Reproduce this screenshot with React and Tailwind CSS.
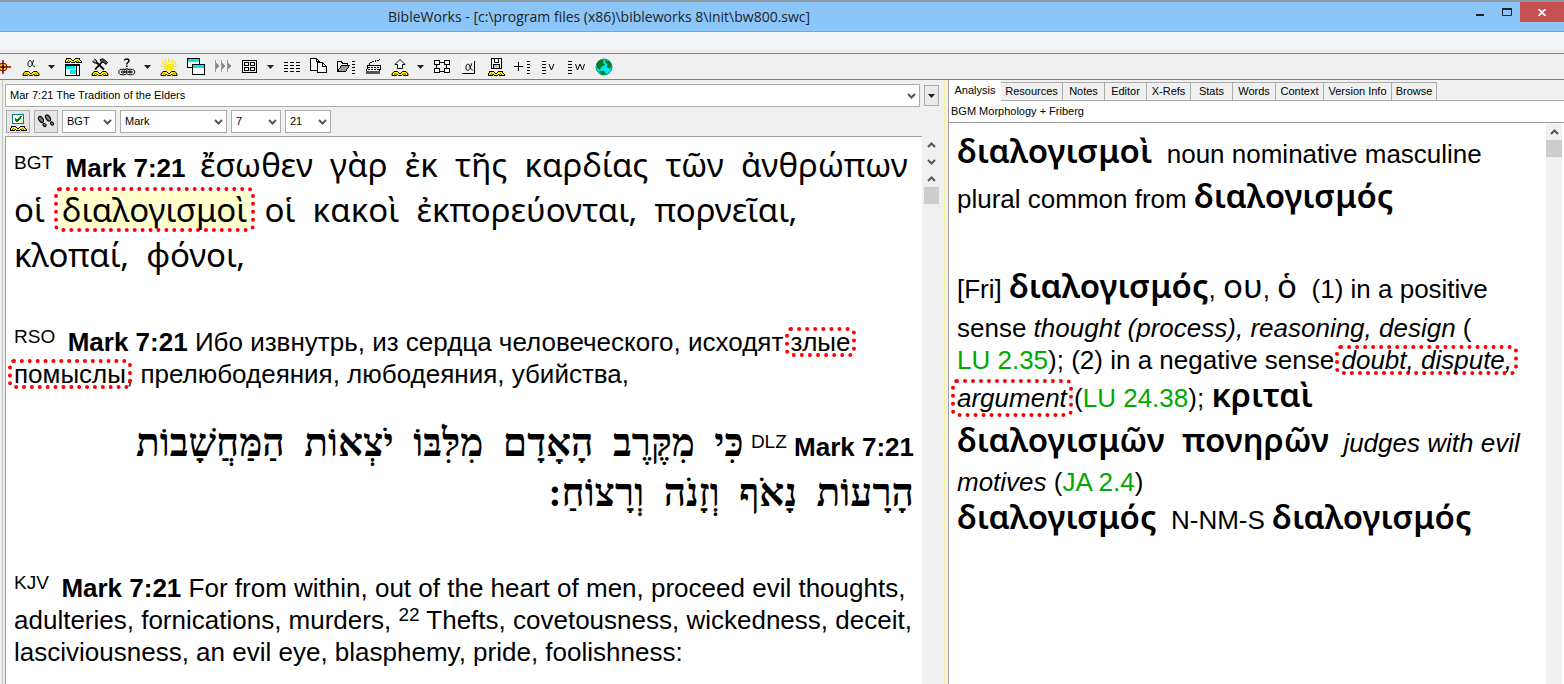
const Hills = ({ y = 12 }) => (
  <g transform={`translate(0 ${y})`}>
    <path d="M1 5.5V4L3 1.5H6.5L9 4L11.5 1.5H15L17 4V5.5H12.5L11.5 4.5L10.5 5.5H7.5L6.5 4.5L5.5 5.5Z" fill="#ffee00" stroke="#000" strokeWidth="1" />
    <path d="M3 4.5L4.5 3.5L6 4.5M12 4.5L13.5 3.5L15 4.5" fill="none" stroke="#7a7000" strokeWidth="1" />
  </g>
);

const Svg = ({ children, crisp = true }) => (
  <svg width="18" height="18" viewBox="0 0 18 18" fill="none" stroke="#000" strokeWidth="1" shapeRendering={crisp ? "crispEdges" : "auto"} aria-hidden="true" className="shrink-0">
    {children}
  </svg>
);

const ListLines = ({ x, w = 4 }) => (
  <path d={`M${x} 3.5h${w}M${x} 6.5h${w}M${x} 9.5h${w}M${x} 12.5h${w}M${x} 15.5h${w}`} />
);

const icons = {
  alpha: (
    <Svg crisp={false}>
      <path d="M11.5 2C10.5 6.800 9 9 7.4 8.7C5.200 8.300 5.600 2.700 8 2.5C10.2 2.400 10 8.7 12.8 8.7" />
      <Hills />
    </Svg>
  ),
  window: (
    <Svg>
      <Hills y={-1} />
      <rect x="1.5" y="6.5" width="14" height="11" fill="#fff" />
      <path d="M2 9h9" stroke="#00e8f0" strokeWidth="3" />
      <path d="M6 14h6" stroke="#00e8f0" strokeWidth="4" />
      <path d="M12.5 7v10M2 7.500h13" />
    </Svg>
  ),
  tools: (
    <Svg crisp={false}>
      <path d="M3 2L13 11.500" strokeWidth="1.800" />
      <path d="M4 11.500L11.500 3.500" strokeWidth="1.800" />
      <path d="M9 1.5L12 0.8L16.5 4.5L15 6.5L12 4L10.5 4.5Z" fill="#555" />
      <path d="M1.500 3L3 5L5.500 5L5.500 2.500L3.500 1" fill="#999" />
      <Hills />
    </Svg>
  ),
  help: (
    <Svg crisp={false}>
      <path d="M6.5 2.5C6.5 .6 11 .4 11 2.8C11 4.4 8.8 4.2 8.8 6.4M8.8 7.6v1.4" strokeWidth="1.5" />
      <ellipse cx="5" cy="14" rx="4.3" ry="2.8" fill="#fff" />
      <ellipse cx="12.5" cy="14" rx="4.3" ry="2.8" fill="#fff" />
      <ellipse cx="5" cy="14" rx="2" ry="1" />
      <ellipse cx="12.5" cy="14" rx="2" ry="1" />
      <path d="M6.5 12.5C7 10 10.5 10 11 12.5M5 14h8" />
    </Svg>
  ),
  sun: (
    <Svg crisp={false}>
      <path d="M9 0v5M5 1.5l2 4M13 1.5l-2 4M2 3.5l3.5 3.5M16 3.5l-3.5 3.5M1 8h4M17 8h-4" stroke="#f4e400" strokeWidth="1.2" />
      <path d="M5 12V9L7 6.5H11L13 9V12Z" fill="#ffee00" stroke="#ffee00" />
      <Hills />
    </Svg>
  ),
  windows: (
    <Svg>
      <rect x=".5" y=".5" width="12" height="9" fill="#fff" />
      <path d="M1 2.500h11" stroke="#00e8f0" strokeWidth="3" />
      <rect x="5.5" y="6.5" width="12" height="10" fill="#fff" />
      <path d="M6 8.5h11" stroke="#00e8f0" strokeWidth="3" />
    </Svg>
  ),
  arrows: (
    <Svg>
      <path d="M1.5 2v12M7.5 2v12M13.5 2v12" stroke="#999" />
      <path d="M2 5l3 3l-3 3zM8 5l3 3l-3 3zM14 5l3 3l-3 3z" fill="#888" stroke="none" />
    </Svg>
  ),
  grid: (
    <Svg>
      <rect x="1.500" y="2.500" width="14" height="12" />
      <rect x="3.500" y="4.500" width="4" height="3" />
      <rect x="9.500" y="4.500" width="4" height="3" />
      <rect x="3.500" y="9.500" width="4" height="3" />
      <rect x="9.500" y="9.500" width="4" height="3" />
    </Svg>
  ),
  lines: (
    <Svg>
      <path d="M1 4.5h16M1 7.5h16M1 10.5h16M1 13.5h16" strokeDasharray="4 2" />
    </Svg>
  ),
  copy: (
    <Svg>
      <path d="M.5 .5h6l3 3v9h-9zM6.5 .5v3h3" fill="#f8f8f8" />
      <path d="M7.500 4.5h5l4 4v6h-9zM12.5 4.5v4h4" fill="#f8f8f8" />
    </Svg>
  ),
  folder: (
    <Svg>
      <path d="M.5 12.5v-9h4l1 2h5v3" fill="#eee" />
      <path d="M.5 13.5l4-6h8l-4 6z" fill="#999" />
      <ListLines x={15} w={3} />
    </Svg>
  ),
  keyboard: (
    <Svg>
      <path d="M5 6.5v-2h3v-1h3v-1h3v-1h2" strokeDasharray="2 1" />
      <path d="M3.5 7.5h13l-1 8h-13z" fill="#fff" />
      <path d="M4 9.5h12M4 11.5h12" strokeWidth="1" strokeDasharray="2 1" />
      <path d="M2 14h14" strokeWidth="3" stroke="#555" />
    </Svg>
  ),
  upload: (
    <Svg crisp={false}>
      <path d="M9 1.5L14 6.5H11.5V10.5H6.5V6.5H4Z" fill="#fff" />
      <Hills />
    </Svg>
  ),
  nodes: (
    <Svg>
      <path d="M5 4.500h8M5 13.500h8M3.500 5v9M13.500 5v9" />
      <rect x="1.5" y="2.5" width="5" height="4" fill="#fff" />
      <rect x="11.5" y="2.5" width="5" height="4" fill="#fff" />
      <rect x="1.5" y="10.5" width="5" height="4" fill="#fff" />
      <rect x="11.5" y="10.5" width="5" height="4" fill="#fff" />
    </Svg>
  ),
  alphaKey: (
    <Svg crisp={false}>
      <path d="M2.5 15V3.5h12" stroke="#fff" />
      <path d="M14.5 3v12.5H2" />
      <path d="M11.5 5.500C10.5 10.5 9 12.6 7.4 12.3C5.200 12 5.600 6.300 8 6.1C10.2 6 10 12.2 12.8 12.2" />
    </Svg>
  ),
  disk: (
    <Svg>
      <path d="M4.5 .5h10v10h-10z" fill="#fff" />
      <path d="M7.5 1v3h4v-3" />
      <rect x="6.5" y="6.5" width="6" height="4" fill="#ccc" />
      <Hills />
    </Svg>
  ),
  plus: (
    <Svg>
      <path d="M0 8.5h9M4.5 4v9" />
      <ListLines x={13} w={3} />
    </Svg>
  ),
  listV: (
    <Svg crisp={false}>
      <ListLines x={1} w={4} />
      <path d="M8 6l2.500 6l2.500-6" />
    </Svg>
  ),
  listW: (
    <Svg crisp={false}>
      <ListLines x={0} w={4} />
      <path d="M7.500 6l2 6l2.500-6l2.500 6l2-6" />
    </Svg>
  ),
  globe: (
    <Svg crisp={false}>
      <circle cx="9" cy="9" r="8" fill="#00e5ee" stroke="#0b8f86" />
      <path d="M2 5L5 2L9 2L8 5L10 7L6 9L5 12L2 10ZM11 2L15 4L16.5 8L15 11L12 9L12 6L10 4ZM4 13L9 13L11 16L7 17Z" fill="#0b7a1c" stroke="none" />
    </Svg>
  ),
};

const toolbar = [
  ["Morphology", "alpha"], ["Morphology options"],
  ["Browse window", "window"], ["Tools", "tools"],
  ["Help", "help"], ["Help options"],
  ["Highlight", "sun"], ["Cascade", "windows"], ["Parallel", "arrows"],
  ["Layout", "grid"], ["Layout options"],
  ["List", "lines"], ["Copy", "copy"], ["Open list", "folder"], ["Keyboard", "keyboard"],
  ["Export", "upload"], ["Export options"],
  ["Diagram", "nodes"], ["Greek keys", "alphaKey"], ["Save", "disk"], ["Add to list", "plus"],
  ["Verse list", "listV"], ["Word list", "listW"], ["Internet", "globe"],
];

const Chevron = ({ up = false }) => (
  <svg width="9" height="6" viewBox="0 0 9 6" fill="none" stroke="#555" strokeWidth="2" aria-hidden="true">
    <path d={up ? "M1 5L4.5 1.5L8 5" : "M1 1L4.5 4.5L8 1"} />
  </svg>
);

const Caret = () => (
  <svg width="7" height="4" viewBox="0 0 7 4" aria-hidden="true"><path d="M0 0h7L3.5 4z" fill="#222" /></svg>
);

const Select = ({ label, value, className }) => (
  <div className={"relative h-[23px] border border-[#ababab] bg-white " + className}>
    <select aria-label={label} className="block h-full w-full appearance-none bg-transparent pl-1 text-[11px] outline-none">
      <option>{value}</option>
    </select>
    <span className="pointer-events-none absolute inset-y-0 right-[3px] flex items-center"><Chevron /></span>
  </div>
);

const Line = ({ tall, children }) => (
  <span className={"block " + (tall ? "leading-[45px]" : "leading-[32px]")}>{children}</span>
);
const Gk = ({ bold, children }) => (
  <span lang="el" className={"font-['Noto_Sans',sans-serif] text-[33px] leading-none " + (bold ? "font-semibold" : "")}>{children}</span>
);
const Tag = ({ children }) => <span className="align-[8px] text-[19px] leading-none">{children}</span>;
const Version = ({ children }) => <Tag>{children}{"\u00a0"}</Tag>;
const Ref = ({ children }) => <a href="#verse" className="text-[#00a800]">{children}</a>;

const Mark = ({ fill, roomy, children }) => (
  <span className="relative isolate">
    <span className={
      "absolute -z-10 rounded-md border-4 border-dotted border-[#f00] bg-clip-content p-px " +
      (fill ? "-inset-x-2 inset-y-0 bg-[#ffffcc]" : roomy ? "-inset-x-1.5 -inset-y-1" : "-inset-x-1.5 inset-y-0")
    } />
    {children}
  </span>
);

const tabs = [
  ["Resources", "w-[62px]"], ["Notes", "w-[42px]"], ["Editor", "w-[42px]"], ["X-Refs", "w-[44px]"],
  ["Stats", "w-[42px]"], ["Words", "w-[43px]"], ["Context", "w-[48px]"], ["Version Info", "w-[68px]"], ["Browse", "w-[45px]"],
];

const SP = "\u00a0 ";
const join = (...words) => words.join(SP);

export default function App() {
  return (
    <div className="flex min-h-screen flex-col bg-[#f0f0f0] font-['Liberation_Sans',Arial,sans-serif] text-black">
      <header className="flex h-8 items-start border-b border-t-2 border-b-[#7aa7cf] border-t-[#8f9aa3] bg-[#8cc6f9]">
        <h1 className="ml-[388px] flex-1 pt-[5px] font-['Open_Sans',sans-serif] text-[14px] leading-[20px] text-[#222]">
          BibleWorks - [c:\program files (x86)\bibleworks 8\init\bw800.swc]
        </h1>
        <button aria-label="Minimize" className="flex h-5 w-7 items-center justify-center">
          <svg width="8" height="12" aria-hidden="true"><path d="M0 9h8" stroke="#222" strokeWidth="2" /></svg>
        </button>
        <button aria-label="Maximize" className="flex h-5 w-[26px] items-center justify-center">
          <svg width="10" height="8" aria-hidden="true"><path d="M.5 1v6.500h9V1" fill="none" stroke="#222" /><path d="M0 1h10" stroke="#222" strokeWidth="2" /></svg>
        </button>
        <button aria-label="Close" className="flex h-5 w-[44px] items-center justify-center bg-[#c75050]">
          <svg width="8" height="7" aria-hidden="true"><path d="M.5 0l7 7M7.500 0l-7 7" stroke="#fff" strokeWidth="1.800" /></svg>
        </button>
      </header>
      <div className="h-[19px] border-b border-[#e2e3e5] bg-[#f4f5f7]" />
      <nav aria-label="Tools" className="mt-0.5 flex h-[27px] items-center overflow-hidden border-y border-[#808080]">
        <button aria-label="Search" className="flex h-6 w-[17px] items-center">
          <svg width="11" height="18" viewBox="0 0 11 18" fill="none" aria-hidden="true">
            <circle cx="3" cy="9" r="4" fill="#ffd800" stroke="#8b0000" />
            <path d="M3 2v14M0 9h11" stroke="#8b0000" strokeWidth="1.500" />
            <circle cx="3" cy="9" r="1.500" fill="#000" />
          </svg>
        </button>
        {toolbar.map(([label, icon]) => (
          <button key={label} aria-label={label} className={"flex h-6 shrink-0 items-center justify-center " + (icon ? "w-[27px]" : "w-[15px]")}>
            {icon ? icons[icon] : <Caret />}
          </button>
        ))}
      </nav>

      <div className="flex flex-1">
        <section className="ml-0.5 flex min-w-0 flex-1 flex-col border-l border-[#c4c4c4] pl-0.5">
          <div className="mt-1 flex items-center gap-1">
            <Select label="Passage" value="Mar 7:21 The Tradition of the Elders" className="flex-1" />
            <button aria-label="History" className="mr-[5px] flex h-[21px] w-[15px] items-center justify-center border border-[#ababab] bg-[#eaeaea]"><Caret /></button>
          </div>
          <div className="my-[3px] flex items-center gap-1">
            <button aria-label="Choose versions" className="ml-px flex h-[23px] w-6 items-center justify-center border border-[#ababab] bg-[#e6e6e6]">
              <Svg>
                <rect x="3.500" y="1.500" width="11" height="9" fill="#fff" stroke="#008080" />
                <path d="M6 5.500l2 2.500l4.500-5" stroke="#008000" strokeWidth="2" />
                <Hills />
              </Svg>
            </button>
            <button aria-label="Follow" className="flex h-[23px] w-6 items-center justify-center border border-[#ababab] bg-[#e6e6e6]">
              <Svg crisp={false}>
                <g fill="#777">
                  <ellipse cx="4" cy="6.500" rx="2" ry="3.400" transform="rotate(-35 4 6.500)" />
                  <ellipse cx="7.500" cy="12" rx="1.300" ry="1.900" transform="rotate(-50 7.500 12)" />
                  <ellipse cx="11" cy="5" rx="2" ry="3.400" transform="rotate(-35 11 5)" />
                  <ellipse cx="15" cy="10.500" rx="1.300" ry="1.900" transform="rotate(-50 15 10.500)" />
                </g>
              </Svg>
            </button>
            <Select label="Version" value="BGT" className="w-[54px]" />
            <Select label="Book" value="Mark" className="w-[107px]" />
            <Select label="Chapter" value="7" className="w-[50px]" />
            <Select label="Verse" value="21" className="w-[46px]" />
          </div>
          <div className="flex flex-1">
            <main className="min-w-0 flex-1 overflow-hidden whitespace-nowrap border-l border-t border-[#a0a0a0] bg-white px-2 pt-[9px] text-[26px]">
              <p>
                <Line tall><Version>BGT</Version>{" "}<b>Mark 7:21</b>{SP}<Gk>{join("ἔσωθεν", "γὰρ", "ἐκ", "τῆς", "καρδίας", "τῶν", "ἀνθρώπων")}</Gk></Line>
                <Line tall><Gk>οἱ{SP}<Mark fill>διαλογισμοὶ</Mark>{SP}{join("οἱ", "κακοὶ", "ἐκπορεύονται,", "πορνεῖαι,")}</Gk></Line>
                <Line tall><Gk>{join("κλοπαί,", "φόνοι,")}</Gk></Line>
              </p>
              <p lang="ru" className="mt-[45px]">
                <Line><Version>RSO</Version>{" "}<b>Mark 7:21</b> Ибо извнутрь, из сердца человеческого, исходят <Mark>злые</Mark></Line>
                <Line><Mark>помыслы</Mark>, прелюбодеяния, любодеяния, убийства,</Line>
              </p>
              <p lang="he" dir="rtl" className="mt-8 leading-[50px]">
                <bdi dir="ltr" className="font-bold">Mark 7:21</bdi>{" "}<bdi dir="ltr"><Tag>DLZ</Tag></bdi>{" "}
                <span className="font-['Liberation_Serif',serif] text-[39px] font-bold leading-none">
                  {join("כִּי", "מִקֶּרֶב", "הָאָדָם", "מִלִּבּוֹ", "יֹצְאוֹת", "הַמַּחֲשָׁבוֹת")}<br />
                  {join("הָרָעוֹת", "נָאֹף", "וְזָנֹה", "וְרָצוֹחַ:")}
                </span>
              </p>
              <p className="mt-[50px]">
                <Line><Version>KJV</Version>{" "}<b>Mark 7:21</b> For from within, out of the heart of men, proceed evil thoughts,</Line>
                <Line>adulteries, fornications, murders, <Tag>22</Tag> Thefts, covetousness, wickedness, deceit,</Line>
                <Line>lasciviousness, an evil eye, blasphemy, pride, foolishness:</Line>
              </p>
            </main>
            <div className="ml-0.5 mr-[5px] flex w-[15px] flex-col items-center">
              <button aria-label="Previous verse" className="flex h-[17px] w-full items-center justify-center"><Chevron up /></button>
              <button aria-label="Next verse" className="flex h-[17px] w-full items-center justify-center"><Chevron /></button>
              <button aria-label="Scroll up" className="flex h-[17px] w-full items-center justify-center"><Chevron up /></button>
              <div className="h-[17px] w-full bg-[#cdcdcd]" />
            </div>
          </div>
        </section>

        <section className="flex w-[620px] shrink-0 flex-col border-l border-[#f5f0a0]">
          <div className="ml-[3px] flex flex-1 flex-col border-l border-[#a0a0a0]">
            <div role="tablist" className="flex items-end text-[11px]">
              <button role="tab" aria-selected="true" className="h-[21px] w-[52px] bg-white">Analysis</button>
              {tabs.map(([name, w]) => (
                <button key={name} role="tab" aria-selected="false" className={"h-[19px] border border-l-0 border-[#ababab] " + w}>{name}</button>
              ))}
              <span className="flex-1 self-stretch border-b border-[#ababab]" />
            </div>
            <h2 className="h-[22px] border-b border-[#a0a0a0] bg-white pl-0.5 text-[11px] leading-[20px]">BGM Morphology + Friberg</h2>
            <div className="flex flex-1 bg-white">
              <article className="min-w-0 flex-1 overflow-hidden whitespace-nowrap pl-2 pt-[9px] text-[26px]">
                <p>
                  <Line tall><Gk bold>διαλογισμοὶ</Gk>{SP} noun nominative masculine</Line>
                  <Line tall>plural common from <Gk bold>διαλογισμός</Gk></Line>
                </p>
                <p className="mt-[45px]">
                  <Line tall>[Fri] <Gk bold>διαλογισμός</Gk>, <Gk>ου</Gk>, <Gk>ὁ</Gk>{SP}(1) in a positive</Line>
                  <Line>sense <i>thought (process), reasoning, design</i> (</Line>
                  <Line><Ref>LU 2.35</Ref>); (2) in a negative sense <Mark><i>doubt, dispute,</i></Mark></Line>
                  <Line tall><Mark roomy><i>argument</i></Mark> (<Ref>LU 24.38</Ref>); <Gk bold>κριταὶ</Gk></Line>
                  <Line tall><Gk bold>{join("διαλογισμῶν", "πονηρῶν")}</Gk>{SP} <i>judges with evil</i></Line>
                  <Line><i>motives</i> (<Ref>JA 2.4</Ref>)</Line>
                  <Line tall><Gk bold>διαλογισμός</Gk>{SP} N-NM-S <Gk bold>διαλογισμός</Gk></Line>
                </p>
              </article>
              <div className="mr-0.5 w-[16px] bg-[#f0f0f0]">
                <button aria-label="Scroll analysis up" className="flex h-[17px] w-full items-center justify-center"><Chevron up /></button>
                <div className="h-[17px] w-full bg-[#cdcdcd]" />
              </div>
            </div>
          </div>
        </section>
      </div>
    </div>
  );
}
